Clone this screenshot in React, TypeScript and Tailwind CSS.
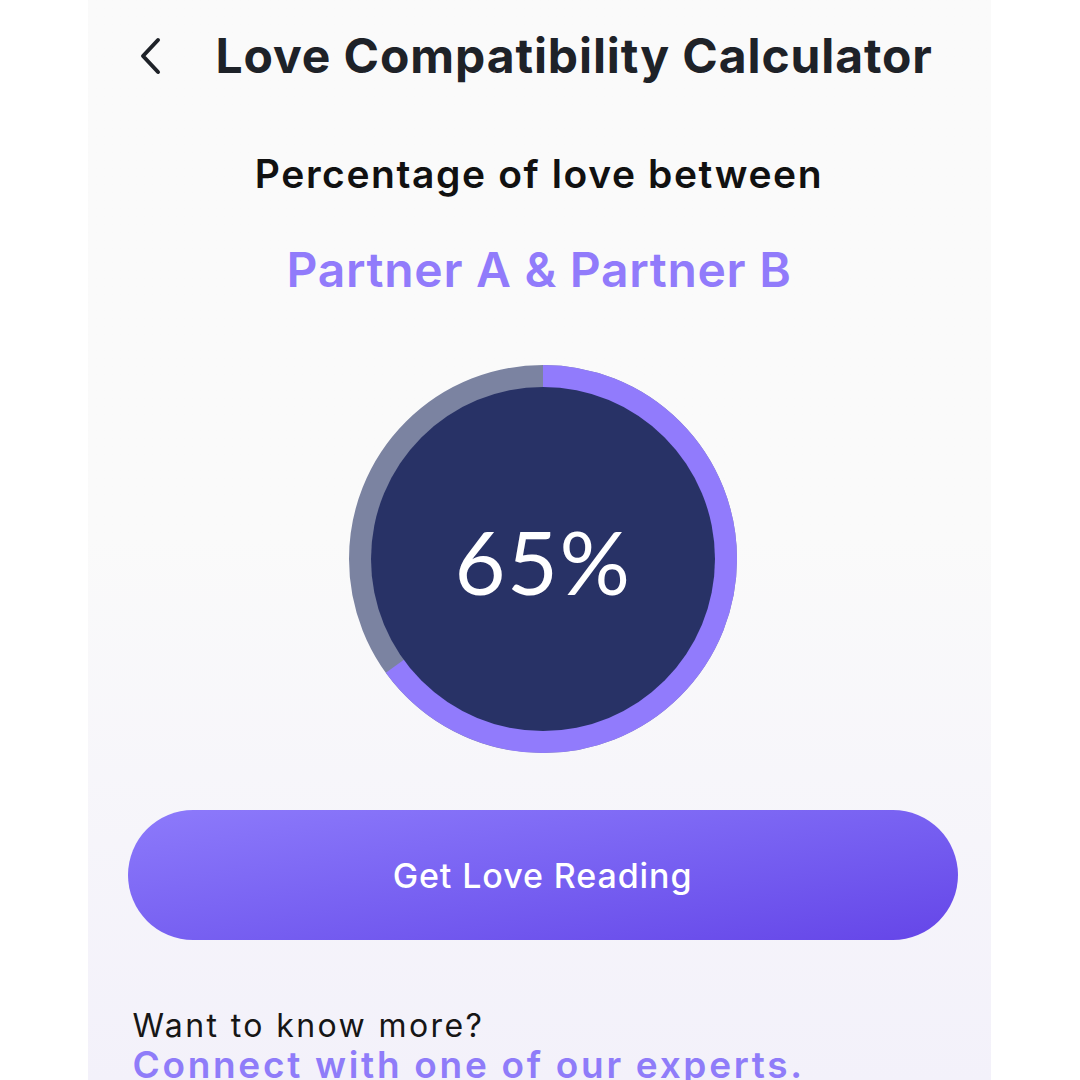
import React from "react";

function ScoreRing({ percent }: { percent: number }) {
  const r = 182;
  const c = 2 * Math.PI * r;
  return (
    <div className="relative w-[388px] h-[388px] ml-[8px]">
      <svg width="388" height="388" viewBox="0 0 388 388" className="block">
        <circle cx="194" cy="194" r={r} fill="none" stroke="#7b83a1" strokeWidth="24" />
        <circle
          cx="194"
          cy="194"
          r={r}
          fill="none"
          stroke="#917bfc"
          strokeWidth="24"
          strokeDasharray={`${(c * percent) / 100} ${c}`}
          transform="rotate(-90 194 194)"
        />
        <circle cx="194" cy="194" r="172" fill="#283266" />
      </svg>
      <div className="absolute inset-0 flex items-center justify-center">
        <span className="text-white text-[88px] font-normal tracking-[1.5px] font-['Lato',sans-serif] leading-none mt-[4px]">
          {percent}%
        </span>
      </div>
    </div>
  );
}

export default function App() {
  return (
    <div className="w-[1080px] h-[1080px] overflow-hidden bg-white flex justify-center font-['Inter',sans-serif]">
      <div className="w-[903px] h-full ml-[-2px] bg-gradient-to-b from-[#fafafa] via-[#fafafa] to-[#f3f1fa] flex flex-col">
        {/* Header */}
        <header className="flex items-center pl-[50px] pt-[26px]">
          <button className="w-[30px] h-[44px] flex items-center">
            <svg width="24" height="40" viewBox="0 0 24 40" fill="none">
              <path d="M20 4 L5 20 L20 36" stroke="#1e2228" strokeWidth="4" strokeLinecap="round" strokeLinejoin="round" />
            </svg>
          </button>
          <h1 className="ml-[48px] text-[48px] font-bold text-[#1e2228] tracking-[0.9px] leading-[60px]">
            Love Compatibility Calculator
          </h1>
        </header>

        {/* Partners */}
        <div className="flex flex-col items-center mt-[64px]">
          <p className="text-[39px] font-semibold text-[#111111] tracking-[1.6px] leading-[48px]">Percentage of love between</p>
          <p className="mt-[44px] text-[48px] font-semibold text-[#917bfb] tracking-[0.7px] leading-[56px]">Partner A &amp; Partner B</p>
        </div>

        <div className="flex justify-center mt-[67px]">
          <ScoreRing percent={65} />
        </div>

        {/* CTA */}
        <div className="px-[40px] mt-[57px]">
          <button className="w-[830px] h-[130px] rounded-full bg-gradient-to-br from-[#8d7afb] to-[#6545e8] text-white text-[34px] font-medium tracking-[0.9px]">
            Get Love Reading
          </button>
        </div>

        <div className="pl-[45px] mt-[68px]">
          <p className="text-[32px] text-[#161616] tracking-[2.4px] leading-[36px]">Want to know more?</p>
          <p className="text-[37px] font-semibold text-[#8f7cf9] tracking-[2.7px] leading-[42px]">Connect with one of our experts.</p>
        </div>
      </div>
    </div>
  );
}
